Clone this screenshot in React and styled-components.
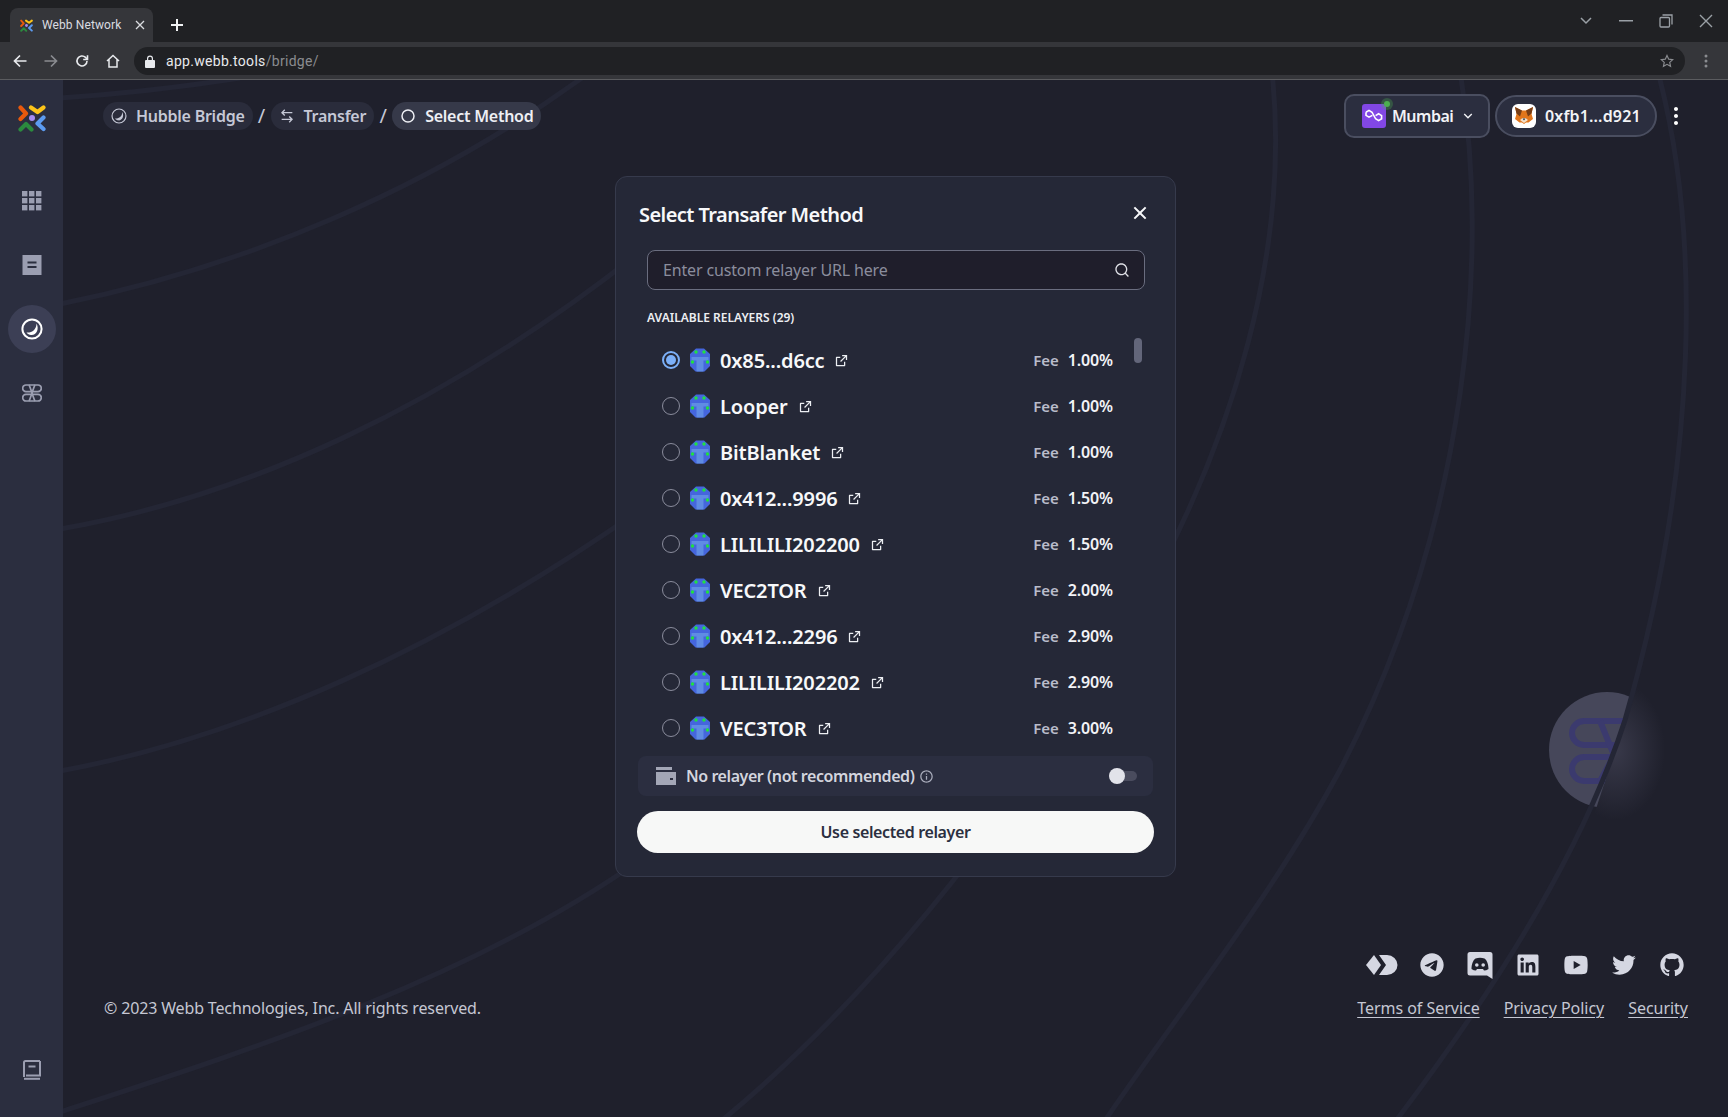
import React from "react";
import styled, { createGlobalStyle } from "styled-components";
import {
  RiGithubFill,
  RiLinkedinBoxFill,
  RiSearchLine,
  RiTelegramFill,
  RiTwitterFill,
  RiYoutubeFill,
  RiExternalLinkLine,
  RiInformationLine,
  RiCloseLine,
  RiArrowDownSLine,
  RiArrowLeftRightLine,
  RiMore2Fill,
} from "react-icons/ri";

const relayers = [
  { name: "0x85...d6cc", fee: "1.00%", selected: true },
  { name: "Looper", fee: "1.00%" },
  { name: "BitBlanket", fee: "1.00%" },
  { name: "0x412...9996", fee: "1.50%" },
  { name: "LILILILI202200", fee: "1.50%" },
  { name: "VEC2TOR", fee: "2.00%" },
  { name: "0x412...2296", fee: "2.90%" },
  { name: "LILILILI202202", fee: "2.90%" },
  { name: "VEC3TOR", fee: "3.00%" },
];

const arcs = [
  "M60 98 Q150 92 240 78",
  "M60 304 C240 268 430 190 590 72",
  "M60 529 C240 498 440 410 640 252",
  "M60 771 C240 738 440 650 640 510",
  "M1272 72 C1290 240 1240 440 1120 640 C1010 820 880 990 720 1122",
  "M1460 72 C1490 250 1470 520 1340 770 C1270 900 1180 1010 1104 1122",
  "M1658 72 C1700 230 1700 460 1625 720 C1580 860 1480 1010 1395 1122",
  "M60 1112 C250 1050 470 980 640 860",
];

const GlobalStyle = createGlobalStyle`
  html, body {
    margin: 0;
    background: #1f202c;
    font-family: "Noto Sans", sans-serif;
  }
  * {
    box-sizing: border-box;
  }
`;

const Page = styled.div`
  width: 1728px;
  height: 1117px;
  display: flex;
  flex-direction: column;
  overflow: hidden;
`;

const TabStrip = styled.div`
  height: 42px;
  background: #202124;
  display: flex;
  align-items: flex-end;
  padding-left: 10px;
  color: #dadce0;
  font: 12px "Roboto", sans-serif;
  letter-spacing: 0.1px;
`;

const Tab = styled.div`
  width: 143px;
  height: 34px;
  background: #35363a;
  border-radius: 8px 8px 0 0;
  display: flex;
  align-items: center;
  padding: 0 8px 0 10px;
  gap: 9px;
  svg {
    flex: none;
  }
  span {
    flex: 1;
    white-space: nowrap;
  }
`;

const NewTab = styled.div`
  margin-left: 17px;
  height: 34px;
  display: flex;
  align-items: center;
`;

const WindowControls = styled.div`
  margin-left: auto;
  align-self: flex-start;
  height: 42px;
  padding-right: 15px;
  display: flex;
  align-items: center;
  gap: 26px;
`;

const Toolbar = styled.div`
  height: 38px;
  background: #35363a;
  border-bottom: 1px solid #5b5c5f;
  display: flex;
  align-items: flex-start;
  padding: 5px 15px 0 13px;
`;

const NavButtons = styled.div`
  display: flex;
  align-items: center;
  gap: 17px;
  height: 28px;
`;

const Omnibox = styled.div`
  width: 1551px;
  height: 28px;
  margin-left: 14px;
  background: #202124;
  border-radius: 14px;
  display: flex;
  align-items: center;
  padding: 0 11px;
  font: 14px "Roboto", sans-serif;
  letter-spacing: 0.3px;
  color: #e8eaed;
  span {
    color: #8a8c90;
  }
  svg:last-child {
    margin-left: auto;
  }
`;

const Url = styled.div`
  margin-left: 11px;
`;

const MenuDots = styled.div`
  margin-left: 19px;
  height: 28px;
  display: flex;
  align-items: center;
`;

const Body = styled.div`
  flex: 1;
  position: relative;
  display: flex;
  min-height: 0;
`;

const Backdrop = styled.svg`
  position: absolute;
  left: 0;
  top: 0;
  width: 1728px;
  height: 1037px;
`;

const Sidebar = styled.aside`
  position: relative;
  z-index: 1;
  width: 63px;
  flex: none;
  background: #2b2e3f;
  display: flex;
  flex-direction: column;
  align-items: center;
  padding-top: 24px;
`;

const SideIcons = styled.div`
  margin-top: 45px;
  display: flex;
  flex-direction: column;
  align-items: center;
  gap: 16px;
`;

const SideItem = styled.div`
  width: 48px;
  height: 48px;
  border-radius: 50%;
  display: flex;
  align-items: center;
  justify-content: center;
  background: ${(p) => (p.$active ? "#3c3f55" : "transparent")};
`;

const SideFoot = styled.div`
  margin-top: auto;
  padding-bottom: 37px;
  display: flex;
`;

const Main = styled.main`
  position: relative;
  flex: 1;
  min-width: 0;
  display: flex;
  flex-direction: column;
`;

const TopBar = styled.header`
  display: flex;
  align-items: center;
  padding: 14px 0 0 40px;
  height: 57px;
`;

const Crumbs = styled.nav`
  display: flex;
  align-items: center;
  color: #c5c8d6;
`;

const Crumb = styled.div`
  height: 28px;
  padding: 0 8px;
  border-radius: 14px;
  display: flex;
  align-items: center;
  gap: 9px;
  font-size: 16px;
  font-weight: 600;
  letter-spacing: -0.25px;
  background: ${(p) => (p.$current ? "#363949" : "#2a2c3b")};
  color: ${(p) => (p.$current ? "#eeeff4" : "#c5c8d6")};
`;

const Slash = styled.span`
  width: 18px;
  text-align: center;
  font-size: 20px;
  line-height: 24px;
`;

const TopActions = styled.div`
  margin-left: auto;
  display: flex;
  align-items: center;
  gap: 5px;
  padding-right: 40px;
`;

const NetworkButton = styled.div`
  position: relative;
  width: 146px;
  height: 44px;
  border: 2px solid #4a4e60;
  border-radius: 10px;
  background: #2b2e3f;
  color: #f2f3f6;
  display: flex;
  align-items: center;
  padding-left: 16px;
  gap: 6px;
  font-size: 16px;
  font-weight: 600;
  letter-spacing: -0.5px;
`;

const Chevron = styled(RiArrowDownSLine)`
  margin-left: 1px;
`;

const WalletButton = styled.div`
  width: 162px;
  height: 42px;
  border: 2px solid #4a4e60;
  border-radius: 21px;
  background: #2b2e3f;
  color: #f2f3f6;
  display: flex;
  align-items: center;
  padding-left: 15px;
  gap: 9px;
  font-size: 16px;
  font-weight: 600;
  letter-spacing: 0.15px;
`;

const ChainIcon = styled.div`
  position: relative;
  width: 24px;
  height: 24px;
  border-radius: 3px;
  background: #8247e5;
  display: flex;
  align-items: center;
  justify-content: center;
  &::after {
    content: "";
    position: absolute;
    right: -4px;
    top: -3px;
    width: 6px;
    height: 6px;
    border-radius: 50%;
    background: #4caf50;
    box-shadow: 0 0 0 3px rgba(76, 175, 80, 0.3);
  }
`;

const FoxTile = styled.div`
  width: 24px;
  height: 24px;
  border-radius: 6px;
  background: #fff;
  display: flex;
  align-items: center;
  justify-content: center;
`;

const More = styled.div`
  margin-left: 2px;
  display: flex;
  color: #fff;
`;

const Dialog = styled.section`
  width: 561px;
  height: 701px;
  margin: 39px auto 0;
  background: #252837;
  border: 1px solid #363a4c;
  border-radius: 12px;
  display: flex;
  flex-direction: column;
  padding: 0 22px;
`;

const DialogHead = styled.div`
  height: 73px;
  display: flex;
  align-items: center;
  justify-content: space-between;
  padding: 2px 0 0 1px;
  color: #f7f8fa;
`;

const DialogTitle = styled.h2`
  margin: 0;
  font-size: 20px;
  font-weight: 600;
  letter-spacing: -0.56px;
`;

const Close = styled.div`
  display: flex;
  margin: -4px 1px 0 0;
`;

const SearchBox = styled.div`
  margin: 0 8px 0 9px;
  height: 40px;
  border: 1px solid #6a6d7f;
  border-radius: 8px;
  background: #1f1e2b;
  display: flex;
  align-items: center;
  justify-content: space-between;
  padding: 0 14px 0 15px;
  font-size: 16px;
  letter-spacing: -0.15px;
  color: #8b8d9d;
  svg {
    color: #dfe0e6;
  }
`;

const SectionLabel = styled.div`
  margin: 19px 9px 0;
  height: 17px;
  line-height: 17px;
  font-size: 12px;
  font-weight: 600;
  color: #eceef2;
  text-transform: uppercase;
`;

const RelayerList = styled.div`
  position: relative;
  margin-top: 10px;
  height: 420px;
  padding: 1px 40px 0 24px;
  overflow: hidden;
`;

const Thumb = styled.div`
  position: absolute;
  right: 11px;
  top: 2px;
  width: 8px;
  height: 25px;
  border-radius: 4px;
  background: #63667a;
`;

const Row = styled.div`
  height: 46px;
  display: flex;
  align-items: center;
`;

const Radio = styled.div`
  width: 18px;
  height: 18px;
  border-radius: 50%;
  flex: none;
  border: ${(p) => (p.$checked ? "2px solid #7cb0f8" : "1px solid #8a8c9c")};
  display: flex;
  align-items: center;
  justify-content: center;
  &::after {
    content: "";
    width: 10px;
    height: 10px;
    border-radius: 50%;
    background: ${(p) => (p.$checked ? "#7cb0f8" : "transparent")};
  }
`;

const RelayerIcon = styled.svg`
  margin-left: 9px;
  flex: none;
`;

const RelayerName = styled.span`
  margin-left: 9px;
  font-size: 20px;
  font-weight: 600;
  letter-spacing: -0.15px;
  color: #f7f8fa;
`;

const LinkOut = styled.span`
  display: flex;
  margin-left: 10px;
  color: #eceef2;
`;

const Fee = styled.div`
  margin-left: auto;
  display: flex;
  align-items: baseline;
  gap: 9px;
  font-size: 16px;
  font-weight: 600;
  letter-spacing: -0.1px;
  color: #f2f3f6;
  span {
    font-size: 15px;
    color: #b9bcca;
  }
`;

const OptOut = styled.div`
  height: 40px;
  border-radius: 8px;
  background: #2b2e40;
  display: flex;
  align-items: center;
  padding: 0 16px 0 18px;
  color: #d3d5de;
  font-size: 16px;
  font-weight: 600;
  letter-spacing: -0.43px;
  svg {
    flex: none;
  }
`;

const OptText = styled.span`
  margin-left: 10px;
`;

const InfoMark = styled.span`
  display: flex;
  margin-left: 5px;
  color: #a9acbb;
`;

const Toggle = styled.div`
  margin-left: auto;
  position: relative;
  width: 28px;
  height: 10px;
  border-radius: 5px;
  background: #4a4c5e;
  &::before {
    content: "";
    position: absolute;
    left: 0;
    top: -3px;
    width: 16px;
    height: 16px;
    border-radius: 50%;
    background: #e2e3ea;
  }
`;

const PrimaryButton = styled.button`
  margin: 15px -1px 0;
  height: 42px;
  border: 0;
  border-radius: 21px;
  background: #f7f8f7;
  color: #2b2f40;
  font: 600 16px "Noto Sans", sans-serif;
  letter-spacing: -0.38px;
`;

const Footer = styled.footer`
  margin-top: 74px;
  padding: 0 40px 0 41px;
  display: flex;
  justify-content: space-between;
  align-items: flex-end;
  color: #c5c7d3;
  font-size: 16px;
`;

const Copyright = styled.div`
  line-height: 22px;
  letter-spacing: -0.15px;
`;

const FooterRight = styled.div`
  display: flex;
  flex-direction: column;
  align-items: flex-end;
  gap: 18px;
`;

const Socials = styled.div`
  display: flex;
  gap: 20px;
  padding-right: 2px;
  color: #d5d7e2;
  svg {
    display: block;
  }
`;

const Links = styled.div`
  display: flex;
  gap: 24px;
  line-height: 22px;
  letter-spacing: -0.03px;
  a {
    color: inherit;
    text-decoration: underline;
    text-underline-offset: 3px;
  }
`;

const WebbMark = ({ size = 28 }) => (
  <svg width={size} height={size} viewBox="0 0 28 28" fill="none" strokeWidth="4.2" strokeLinecap="round" strokeLinejoin="round">
    <path d="M2.5 3.500 8 9.500 2.500 15" stroke="#e8590c" />
    <path d="M13 3.500 19.500 8 25.500 3.500" stroke="#fcc419" />
    <path d="M25.500 13.500 19.500 19.500 25.500 25" stroke="#5c9bf0" />
    <path d="M2.500 25.500 8 20 13.500 25.500" stroke="#2b8a3e" />
    <circle cx="14" cy="14" r="3" fill="#a58bf0" />
  </svg>
);

const GridIcon = () => (
  <svg width="20" height="20" viewBox="0 0 20 20" fill="#9b9eb1">
    {[0, 7, 14].map((y) =>
      [0, 7, 14].map((x) => <rect key={`${x}-${y}`} x={x} y={y} width="5.4" height="5.4" />)
    )}
  </svg>
);

const NoteIcon = () => (
  <svg width="20" height="20" viewBox="0 0 20 20">
    <rect x="0.5" width="19" height="20" fill="#9b9eb1" />
    <path d="M5.5 7.5h9M5.5 12h9" stroke="#2b2e3f" strokeWidth="2" />
  </svg>
);

const HubbleIcon = ({ size = 22, color = "#fff", weight = 2 }) => (
  <svg width={size} height={size} viewBox="0 0 22 22" fill="none">
    <circle cx="11" cy="11" r="9.6" stroke={color} strokeWidth={weight} />
    <path d="M5.500 14.500C11 15 15.500 11.500 15.500 5.500 18.500 11 15.500 17.500 10 17 8.300 16.900 6.500 16 5.500 14.500Z" fill={color} />
  </svg>
);

const LoopsIcon = ({ color = "#9b9eb1" }) => (
  <svg width="20" height="18" viewBox="0 0 20 18" fill="none" stroke={color} strokeWidth="1.7">
    <path d="M4 1h12a3.3 3.3 0 0 1 0 6.6H4A3.3 3.3 0 0 1 4 1Z" />
    <path d="M4 10.4h12a3.3 3.3 0 0 1 0 6.6H4a3.3 3.3 0 0 1 0-6.6Z" />
    <path d="M7 1c2 3.5 4 12.5 6 16M13 1c-2 3.5-4 12.5-6 16" />
  </svg>
);

const BookIcon = () => (
  <svg width="20" height="20" viewBox="0 0 20 20" fill="none" stroke="#9b9eb1">
    <path d="M18 1H3.5A1.5 1.5 0 0 0 2 2.5V17M18 1v14.500H4" strokeWidth="2" />
    <path d="M2 18.800h16" strokeWidth="2" />
    <path d="M6.500 6.500h7" strokeWidth="2" />
  </svg>
);

const PolygonIcon = () => (
  <svg width="20" height="13" viewBox="0 0 20 13" fill="none" stroke="#fff" strokeWidth="1.6">
    <path d="M2 3.200 5 1.400l3 1.800 3.600 6.600 3 1.800 3-1.800V6.600l-3-1.800-3 1.800" />
    <path d="M8.400 6.400l-3.400 1.800-3-1.800V3.200" />
  </svg>
);

const FoxIcon = () => (
  <svg width="20" height="19" viewBox="0 0 20 19">
    <path d="M1 1l7 3.500h4L19 1l-1.500 7L19 13l-4.500 3.500H12L10 18l-2-1.500H5.500L1 13l1.500-5Z" fill="#e2761b" />
    <path d="M1 1l7 3.500-2 6-3.500-3ZM19 1l-7 3.500 2 6 3.500-3Z" fill="#763d16" />
    <path d="M6 14l4 3 4-3-2.500-2h-3Z" fill="#f5e1cb" />
    <path d="M8.500 12.500h3L10 14.500Z" fill="#233447" />
  </svg>
);

const RelayerGlyph = () => (
  <RelayerIcon width="22" height="24" viewBox="0 0 22 24">
    <path d="M7 .500h8L21 6v12l-5.500 5.500h-9L1 18V6Z" fill="#4566dd" />
    <path d="M2.500 9h17v3.500h-5V23.500h-7V12.500h-5Z" fill="#5f8ce4" />
    <g fill="#1fe23f">
      <circle cx="7" cy="4" r="1.700" />
      <circle cx="15" cy="4" r="1.700" />
      <circle cx="3.500" cy="14" r="1.700" />
      <circle cx="18.500" cy="14" r="1.700" />
    </g>
  </RelayerIcon>
);

const CommonwealthIcon = () => (
  <svg width="32" height="28" viewBox="0 0 32 28" fill="currentColor">
    <path d="M0 14 8 4 15 14 8 24Z" />
    <path d="M13 4H21A10.500 10 0 0 1 21 24H13L20 14Z" />
  </svg>
);

const DiscordIcon = () => (
  <svg width="28" height="28" viewBox="0 0 28 28">
    <path d="M4 1H24A2.500 2.500 0 0 1 26.500 3.500V28L21 24.500H4A2.500 2.500 0 0 1 1.500 22V3.500A2.500 2.500 0 0 1 4 1Z" fill="currentColor" />
    <path d="M9.500 7.500C11 7 12.500 6.800 14 6.800S17 7 18.500 7.500C20.800 9 22.500 13 22.500 18C21 19 19.500 19.500 18 19.500L17 18H11L10 19.500C8.500 19.500 7 19 5.500 18 5.500 13 7.200 9 9.500 7.500Z" fill="#1f202c" />
    <circle cx="10.800" cy="14" r="1.800" fill="currentColor" />
    <circle cx="17.200" cy="14" r="1.800" fill="currentColor" />
  </svg>
);

function App() {
  return (
    <Page>
      <GlobalStyle />
      <TabStrip>
        <Tab>
          <WebbMark size={13} />
          <span>Webb Network</span>
          <svg width="10" height="10" viewBox="0 0 10 10" stroke="#dadce0" strokeWidth="1.300">
            <path d="M1 1l8 8M9 1l-8 8" />
          </svg>
        </Tab>
        <NewTab>
          <svg width="14" height="14" viewBox="0 0 14 14" stroke="#f1f3f4" strokeWidth="2">
            <path d="M7 1v12M1 7h12" />
          </svg>
        </NewTab>
        <WindowControls>
          <svg width="14" height="8" viewBox="0 0 14 8" fill="none" stroke="#9aa0a6" strokeWidth="1.500">
            <path d="M2 1l5 5 5-5" />
          </svg>
          <svg width="14" height="2" viewBox="0 0 14 2" fill="#9aa0a6">
            <rect width="14" height="1.500" />
          </svg>
          <svg width="14" height="14" viewBox="0 0 14 14" fill="none" stroke="#9aa0a6" strokeWidth="1.300">
            <rect x="1" y="3.500" width="9.500" height="9.500" rx="1" />
            <path d="M3.500 1H13v9.500" />
          </svg>
          <svg width="14" height="14" viewBox="0 0 14 14" stroke="#9aa0a6" strokeWidth="1.400">
            <path d="M1 1l12 12M13 1L1 13" />
          </svg>
        </WindowControls>
      </TabStrip>
      <Toolbar>
        <NavButtons>
          <svg width="14" height="14" viewBox="0 0 14 14" fill="none" stroke="#e8eaed" strokeWidth="1.700">
            <path d="M13.500 7H1.500M7 1.500 1.500 7 7 12.500" />
          </svg>
          <svg width="14" height="14" viewBox="0 0 14 14" fill="none" stroke="#8a8c90" strokeWidth="1.700">
            <path d="M.5 7h12M7 1.500 12.500 7 7 12.500" />
          </svg>
          <svg width="14" height="14" viewBox="0 0 14 14" fill="none" stroke="#e8eaed" strokeWidth="1.600">
            <path d="M12 7a5 5 0 1 1-1.500-3.600L12 5" />
            <path d="M12.500 1.200v4.300H8.200" />
          </svg>
          <svg width="14" height="14" viewBox="0 0 14 14" fill="none" stroke="#e8eaed" strokeWidth="1.500">
            <path d="M1 7l6-5.500L13 7M3 5.500V13h8V5.500" />
          </svg>
        </NavButtons>
        <Omnibox>
          <svg width="10" height="13" viewBox="0 0 10 13" fill="#e8eaed">
            <path d="M1 5h1V3.500a3 3 0 0 1 6 0V5h1a1 1 0 0 1 1 1v6a1 1 0 0 1-1 1H1a1 1 0 0 1-1-1V6a1 1 0 0 1 1-1Zm2.200 0h3.600V3.500a1.800 1.800 0 0 0-3.600 0Z" />
          </svg>
          <Url>
            app.webb.tools<span>/bridge/</span>
          </Url>
          <svg width="14" height="14" viewBox="0 0 24 24" fill="none" stroke="#8a8c90" strokeWidth="2">
            <path d="M12 2.500l2.900 6.300 6.900.8-5.100 4.700 1.400 6.800-6.100-3.400-6.100 3.400 1.400-6.800L2.200 9.600l6.900-.8Z" />
          </svg>
        </Omnibox>
        <MenuDots>
          <svg width="4" height="14" viewBox="0 0 4 14" fill="#8a8c90">
            <circle cx="2" cy="2" r="1.500" />
            <circle cx="2" cy="7" r="1.500" />
            <circle cx="2" cy="12" r="1.500" />
          </svg>
        </MenuDots>
      </Toolbar>
      <Body>
        <Backdrop viewBox="0 80 1728 1037" fill="none">
          <defs>
            <clipPath id="leftOfArc">
              <path d="M1500 660H1645L1594 815H1500Z" />
            </clipPath>
            <clipPath id="rightOfArc">
              <path d="M1645 660H1728V860H1560L1594 815Z" />
            </clipPath>
            <radialGradient id="glow">
              <stop offset="0" stopColor="#4a4a5e" stopOpacity="0.6" />
              <stop offset="1" stopColor="#4a4a5e" stopOpacity="0" />
            </radialGradient>
          </defs>
          <circle cx="1607" cy="750" r="58" fill="#46475a" clipPath="url(#leftOfArc)" />
          <g clipPath="url(#leftOfArc)" stroke="#3b3a6e" strokeWidth="6">
            <path d="M1584 721h60M1584 721a12 12 0 0 0 0 24h50" />
            <path d="M1584 757a12 12 0 0 0 0 24h50M1584 757h50" />
            <path d="M1600 721c6 14 18 46 26 60M1634 721c-10 14-26 46-34 60" />
          </g>
          <ellipse cx="1615" cy="750" rx="50" ry="70" fill="url(#glow)" clipPath="url(#rightOfArc)" />
          <g stroke="#242635" strokeWidth="5">
            {arcs.map((d) => (
              <path key={d} d={d} />
            ))}
          </g>
        </Backdrop>
        <Sidebar>
          <WebbMark />
          <SideIcons>
            <SideItem><GridIcon /></SideItem>
            <SideItem><NoteIcon /></SideItem>
            <SideItem $active><HubbleIcon /></SideItem>
            <SideItem><LoopsIcon /></SideItem>
          </SideIcons>
          <SideFoot><BookIcon /></SideFoot>
        </Sidebar>
        <Main>
          <TopBar>
            <Crumbs>
              <Crumb>
                <HubbleIcon size={16} color="#c5c8d6" weight={1.600} />
                Hubble Bridge
              </Crumb>
              <Slash>/</Slash>
              <Crumb>
                <RiArrowLeftRightLine size={16} />
                Transfer
              </Crumb>
              <Slash>/</Slash>
              <Crumb $current>
                <svg width="16" height="16" viewBox="0 0 16 16" fill="none" stroke="#eeeff4" strokeWidth="1.500">
                  <circle cx="8" cy="8" r="6" />
                </svg>
                Select Method
              </Crumb>
            </Crumbs>
            <TopActions>
              <NetworkButton>
                <ChainIcon><PolygonIcon /></ChainIcon>
                Mumbai
                <Chevron size={16} />
              </NetworkButton>
              <WalletButton>
                <FoxTile><FoxIcon /></FoxTile>
                0xfb1...d921
              </WalletButton>
              <More><RiMore2Fill size={24} /></More>
            </TopActions>
          </TopBar>
          <Dialog>
            <DialogHead>
              <DialogTitle>Select Transafer Method</DialogTitle>
              <Close><RiCloseLine size={24} /></Close>
            </DialogHead>
            <SearchBox>
              Enter custom relayer URL here
              <RiSearchLine size={16} />
            </SearchBox>
            <SectionLabel>Available relayers (29)</SectionLabel>
            <RelayerList>
              <Thumb />
              {relayers.map((r) => (
                <Row key={r.name}>
                  <Radio $checked={r.selected} />
                  <RelayerGlyph />
                  <RelayerName>{r.name}</RelayerName>
                  <LinkOut><RiExternalLinkLine size={15} /></LinkOut>
                  <Fee>
                    <span>Fee</span>
                    {r.fee}
                  </Fee>
                </Row>
              ))}
            </RelayerList>
            <OptOut>
              <svg width="20" height="18" viewBox="0 0 20 18" fill="#a3a6b6">
                <rect y="0" width="16" height="3" />
                <path d="M0 5h20v13H0Zm14 6v2h3v-2Z" fillRule="evenodd" />
              </svg>
              <OptText>No relayer (not recommended)</OptText>
              <InfoMark><RiInformationLine size={15} /></InfoMark>
              <Toggle />
            </OptOut>
            <PrimaryButton>Use selected relayer</PrimaryButton>
          </Dialog>
          <Footer>
            <Copyright>© 2023 Webb Technologies, Inc. All rights reserved.</Copyright>
            <FooterRight>
              <Socials>
                <CommonwealthIcon />
                <RiTelegramFill size={28} />
                <DiscordIcon />
                <RiLinkedinBoxFill size={28} />
                <RiYoutubeFill size={28} />
                <RiTwitterFill size={28} />
                <RiGithubFill size={28} />
              </Socials>
              <Links>
                <a href="#terms">Terms of Service</a>
                <a href="#privacy">Privacy Policy</a>
                <a href="#security">Security</a>
              </Links>
            </FooterRight>
          </Footer>
        </Main>
      </Body>
    </Page>
  );
}

export default App;
